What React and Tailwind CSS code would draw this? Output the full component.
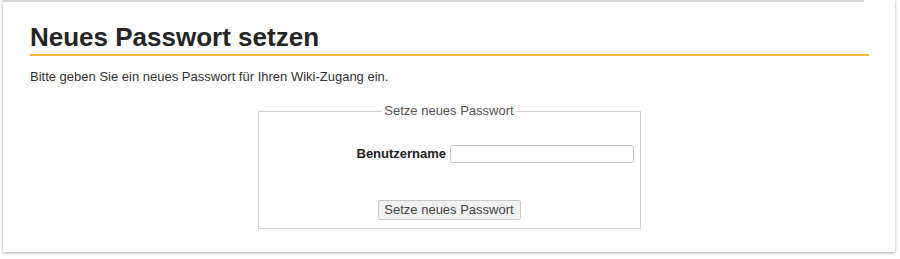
export default function App() {
  return (
    <div className="w-[900px] h-[259px] bg-white overflow-hidden" style={{ fontFamily: '"Liberation Sans", Arial, sans-serif' }}>
      <div className="ml-[3px] w-[892px] h-[252px] bg-white shadow-[0_1px_3px_rgba(0,0,0,0.35)]">
        <div className="h-[2px] w-[861px] bg-[#d6d6d6]" />
        <div className="pl-[27px] pr-[26px]">
          <h1 className="mt-[20px] text-[26px] leading-[30px] font-bold text-[#252525] border-b-2 border-[#f3b63a] pb-[2px]">
            Neues Passwort setzen
          </h1>
          <p className="mt-[13px] text-[13px] leading-[15px] text-[#333]">
            Bitte geben Sie ein neues Passwort für Ihren Wiki-Zugang ein.
          </p>
        </div>
        <fieldset className="mt-[19px] mx-auto w-[383px] border border-[#d3d3d3] pt-[25px] pb-[8px]">
          <legend className="mx-auto px-[2px] text-[13px] leading-[16px] text-[#555]">Setze neues Passwort</legend>
          <div className="flex items-center pl-[98px]">
            <label className="text-[13px] font-bold text-[#222]">Benutzername</label>
            <input type="text" className="ml-[4px] w-[184px] h-[18px] border border-[#ccc] rounded-[2px] bg-white" />
          </div>
          <div className="mt-[36px] flex justify-center">
            <button className="w-[143px] h-[20px] border border-[#c8c8c8] rounded-[2px] bg-[#f1f1f1] text-[13px] text-[#444] leading-[18px]">
              Setze neues Passwort
            </button>
          </div>
        </fieldset>
      </div>
    </div>
  );
}
